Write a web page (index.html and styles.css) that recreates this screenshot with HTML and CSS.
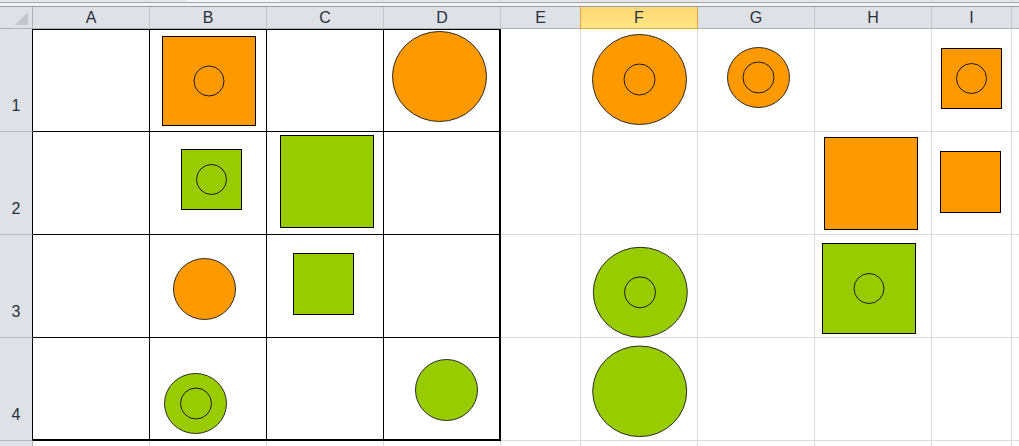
FILE: index.html
```html
<!DOCTYPE html>
<html lang="en">
<head>
  <meta charset="UTF-8" />
  <title>Shapes sheet</title>
  <link rel="stylesheet" href="styles.css">
</head>
<body>
  <div class="topbar"><div class="splitter"></div></div>

  <div class="sheet-wrap">
    <div class="sheet">
      <!-- header row -->
      <div class="corner"></div>
      <div class="colhead">A</div>
      <div class="colhead">B</div>
      <div class="colhead">C</div>
      <div class="colhead">D</div>
      <div class="colhead">E</div>
      <div class="colhead sel">F</div>
      <div class="colhead">G</div>
      <div class="colhead">H</div>
      <div class="colhead">I</div>
      <div class="colhead last"></div>

      <!-- row 1 -->
      <div class="rowhead in">1</div>
      <div class="cell in top"></div>
      <div class="cell in top"></div>
      <div class="cell in top"></div>
      <div class="cell in top right"></div>
      <div class="cell"></div>
      <div class="cell"></div>
      <div class="cell"></div>
      <div class="cell"></div>
      <div class="cell"></div>
      <div class="cell last"></div>

      <!-- row 2 -->
      <div class="rowhead in">2</div>
      <div class="cell in"></div>
      <div class="cell in"></div>
      <div class="cell in"></div>
      <div class="cell in right"></div>
      <div class="cell"></div>
      <div class="cell"></div>
      <div class="cell"></div>
      <div class="cell"></div>
      <div class="cell"></div>
      <div class="cell last"></div>

      <!-- row 3 -->
      <div class="rowhead in">3</div>
      <div class="cell in"></div>
      <div class="cell in"></div>
      <div class="cell in"></div>
      <div class="cell in right"></div>
      <div class="cell"></div>
      <div class="cell"></div>
      <div class="cell"></div>
      <div class="cell"></div>
      <div class="cell"></div>
      <div class="cell last"></div>

      <!-- row 4 -->
      <div class="rowhead in">4</div>
      <div class="cell in bottom"></div>
      <div class="cell in bottom"></div>
      <div class="cell in bottom"></div>
      <div class="cell in bottom right"></div>
      <div class="cell"></div>
      <div class="cell"></div>
      <div class="cell"></div>
      <div class="cell"></div>
      <div class="cell"></div>
      <div class="cell last"></div>

      <!-- row 5 (cut off by the window, its number is below the fold) -->
      <div class="rowhead"></div>
      <div class="cell"></div>
      <div class="cell"></div>
      <div class="cell"></div>
      <div class="cell"></div>
      <div class="cell"></div>
      <div class="cell"></div>
      <div class="cell"></div>
      <div class="cell"></div>
      <div class="cell"></div>
      <div class="cell last"></div>
    </div>

    <!-- drawing layer: shapes float over the cells -->
    <svg class="shapes" width="1019" height="439" viewBox="0 7 1019 439">
      <!-- row 1 -->
      <rect class="org sq" x="162.5" y="36.5" width="93" height="89"/>
      <circle class="ring" cx="209" cy="81" r="15"/>
      <ellipse class="org" cx="439.5" cy="76.5" rx="47" ry="45"/>
      <ellipse class="org" cx="639.5" cy="79.5" rx="47" ry="45"/>
      <circle class="ring" cx="639.5" cy="79.5" r="15.5"/>
      <ellipse class="org" cx="758.5" cy="77.5" rx="31" ry="30"/>
      <circle class="ring" cx="758.5" cy="77.5" r="15.5"/>
      <rect class="org sq" x="941.5" y="48.5" width="60" height="60"/>
      <circle class="ring" cx="971.5" cy="78.5" r="15"/>

      <!-- row 2 -->
      <rect class="grn sq" x="181.5" y="149.5" width="60" height="60"/>
      <circle class="ring" cx="211.5" cy="179.5" r="15"/>
      <rect class="grn sq" x="280.5" y="135.5" width="93" height="92"/>
      <rect class="org sq" x="824.5" y="137.5" width="93" height="92"/>
      <rect class="org sq" x="940.5" y="151.5" width="60" height="61"/>

      <!-- row 3 -->
      <ellipse class="org" cx="204.5" cy="289" rx="31" ry="30.5"/>
      <rect class="grn sq" x="293.5" y="253.5" width="60" height="61"/>
      <ellipse class="grn" cx="640.3" cy="292.3" rx="47" ry="45"/>
      <circle class="ring" cx="640" cy="292.3" r="15.5"/>
      <rect class="grn sq" x="822.5" y="243.5" width="93" height="90"/>
      <circle class="ring" cx="869" cy="288.5" r="15"/>

      <!-- row 4 -->
      <ellipse class="grn" cx="195.5" cy="403.5" rx="31" ry="30"/>
      <circle class="ring" cx="196" cy="403.5" r="15.5"/>
      <ellipse class="grn" cx="446.5" cy="390" rx="31" ry="30.5"/>
      <ellipse class="grn" cx="639.7" cy="391.3" rx="47" ry="45.3"/>
    </svg>
  </div>
</body>
</html>
```

FILE: styles.css
```css
html, body {
  margin: 0;
  padding: 0;
  background: #fff;
  overflow: hidden;
}
body {
  width: 1019px;
  height: 446px;
  font-family: "Liberation Sans", Arial, sans-serif;
  font-size: 16px;
  color: #27313d;
}

/* strip left over from the formula bar */
.topbar {
  height: 7px;
  box-sizing: border-box;
  background: #f2f3f5;
  border-top: 2px solid #e4e6e9;
  border-bottom: 1px solid #9a9da1;
  position: relative;
}
.topbar::before {
  content: "";
  display: block;
  height: 1px;
  background: #a4a7ab;
}
.splitter {
  position: absolute;
  left: 186px;
  top: -2px;
  width: 94px;
  height: 2px;
  background: #f4f5f6;
}

.sheet-wrap {
  position: relative;
}
.sheet {
  display: grid;
  grid-template-columns: 33px 117px 117px 117px 117px 80px 117px 117px 117px 80px 1fr;
  grid-template-rows: 22px 103px 103px 103px 103px 20px;
}
.sheet > div {
  box-sizing: border-box;
}

.corner {
  background: #dee1e6;
  border-right: 1px solid #aeb2b7;
  border-bottom: 1px solid #aeb2b7;
  position: relative;
}
.corner::after {
  content: "";
  position: absolute;
  right: 4px;
  bottom: 3px;
  width: 0;
  height: 0;
  border-left: 13px solid transparent;
  border-bottom: 13px solid #c3c7cc;
}

.colhead {
  background: #dee1e6;
  border-right: 1px solid #c2c5ca;
  border-bottom: 1px solid #aeb2b7;
  display: flex;
  align-items: center;
  justify-content: center;
  padding-top: 1px;
}
.colhead.sel {
  background: linear-gradient(#fcd873, #ffe785);
  border-left: 1px solid #e3a83f;
  border-right: 1px solid #e3a83f;
  border-bottom: 1px solid #e3a83f;
  margin-left: -1px;
}
.colhead.last {
  border-right: none;
}

.rowhead {
  background: #dee1e6;
  border-right: 1px solid #aeb2b7;
  border-bottom: 1px solid #b7bbc0;
  display: flex;
  align-items: flex-end;
  justify-content: center;
  padding-bottom: 16px;
}
.rowhead.in {
  border-right-color: #000;
}

.cell {
  background: #fff;
  border-right: 1px solid #dadada;
  border-bottom: 1px solid #dadada;
}
.cell.last {
  border-right: none;
}
.cell.in {
  border-right-color: #000;
  border-bottom-color: #000;
}
.cell.in.top {
  border-top: 1px solid #000;
}
.cell.in.right {
  border-right-width: 2px;
}
.cell.in.bottom {
  border-bottom-width: 2px;
}

/* drawing layer */
.shapes {
  position: absolute;
  left: 0;
  top: 0;
  pointer-events: none;
}
.shapes .org {
  fill: #ff9900;
  stroke: #2a2a2a;
  stroke-width: 1;
}
.shapes .grn {
  fill: #99cc00;
  stroke: #2a2a2a;
  stroke-width: 1;
}
.shapes .sq {
  stroke: #000;
}
.shapes .ring {
  fill: none;
  stroke: #1a1a1a;
  stroke-width: 1;
}
```
